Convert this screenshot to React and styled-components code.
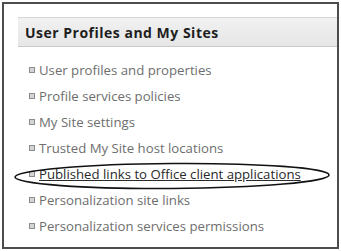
import React from "react";
import styled, { createGlobalStyle } from "styled-components";

const GlobalStyle = createGlobalStyle`
  html, body {
    margin: 0;
    padding: 0;
    background: #ffffff;
  }
`;

const links = [
  { label: "User profiles and properties" },
  { label: "Profile services policies" },
  { label: "My Site settings" },
  { label: "Trusted My Site host locations" },
  { label: "Published links to Office client applications", circled: true },
  { label: "Personalization site links" },
  { label: "Personalization services permissions" },
];

export default function App() {
  return (
    <>
      <GlobalStyle />
      <Page>
        <Panel>
          <Header>User Profiles and My Sites</Header>
          <List>
            {links.map((link) => (
              <Item key={link.label}>
                <Bullet />
                <Link $active={link.circled}>{link.label}</Link>
              </Item>
            ))}
          </List>
          <Circle width="324" height="30" viewBox="0 0 324 30">
            <ellipse
              cx="161"
              cy="15"
              rx="157"
              ry="12.5"
              fill="none"
              stroke="#111"
              strokeWidth="1.6"
              transform="rotate(-0.4 161 15)"
            />
          </Circle>
        </Panel>
      </Page>
    </>
  );
}

const Page = styled.div`
  width: 341px;
  height: 251px;
  padding: 2px;
  box-sizing: border-box;
  background: #ffffff;
`;

const Panel = styled.div`
  position: relative;
  box-sizing: border-box;
  height: 247px;
  border: 2px solid #4d4d4d;
  padding: 13px 0 0 14px;
  overflow: hidden;
  background: #ffffff;
`;

const Header = styled.div`
  height: 28px;
  display: flex;
  align-items: center;
  padding-left: 7px;
  border-top: 1px solid #d6d6d6;
  border-bottom: 1px solid #cbcbcb;
  background: linear-gradient(#f1f1f1, #e6e6e6);
  font-family: "Open Sans", "DejaVu Sans", sans-serif;
  font-weight: 700;
  font-size: 14px;
  letter-spacing: 0.5px;
  color: #1e1e1e;
`;

const List = styled.ul`
  list-style: none;
  margin: 0;
  padding: 10px 0 0 11px;
`;

const Item = styled.li`
  height: 26px;
  display: flex;
  align-items: center;
  gap: 4px;
`;

const Bullet = styled.span`
  width: 4px;
  height: 4px;
  border: 1px solid #8c8c8c;
  background: #d4d4d4;
  flex-shrink: 0;
`;

const Link = styled.span`
  font-family: "Open Sans", "DejaVu Sans", sans-serif;
  font-size: 13.2px;
  color: ${(p) => (p.$active ? "#2a2a2a" : "#6e6e6e")};
  text-decoration: ${(p) => (p.$active ? "underline" : "none")};
  white-space: nowrap;
`;

const Circle = styled.svg`
  position: absolute;
  left: 7px;
  top: 157px;
  pointer-events: none;
`;
